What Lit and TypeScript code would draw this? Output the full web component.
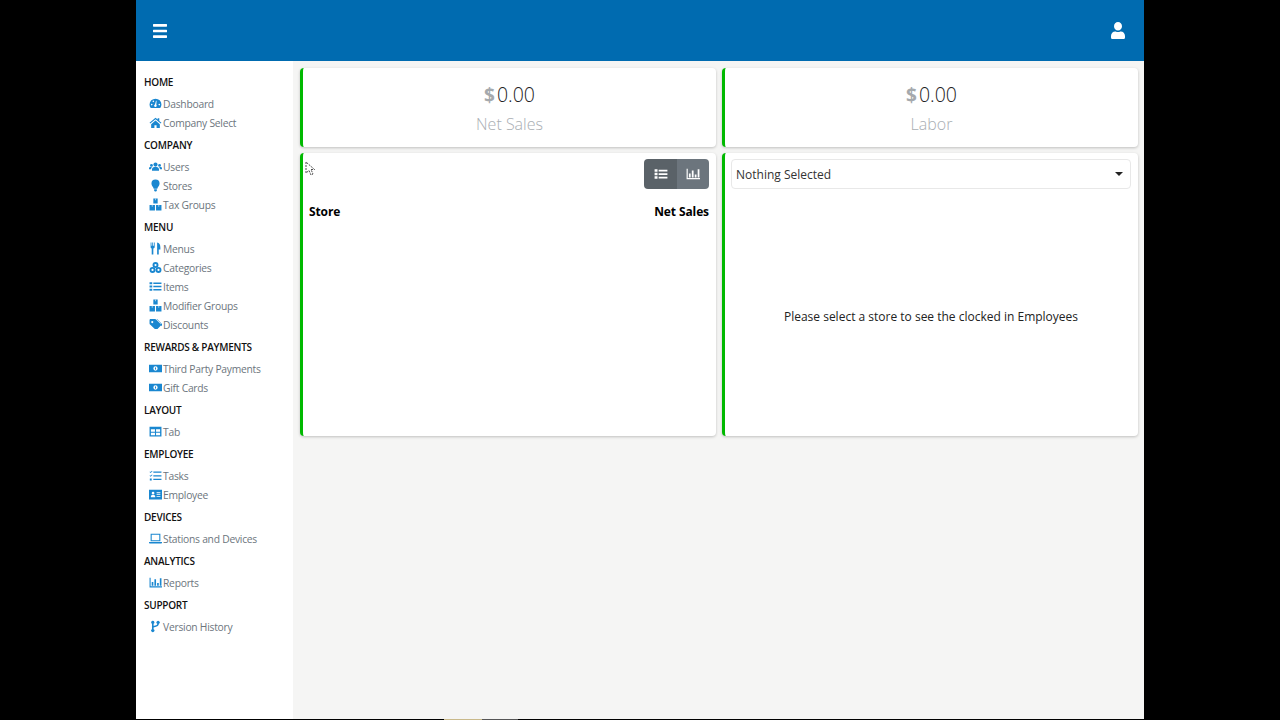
import { LitElement, html, css, svg } from "lit";
import { customElement } from "lit/decorators.js";

const I: Record<string, any> = {
  gauge: svg`<path d="M12 3a11 11 0 0 0-11 11c0 2.500.8 4.700 2.200 6.500h17.600A11 11 0 0 0 23 14 11 11 0 0 0 12 3zm-7 12.500a1.500 1.500 0 1 1 0-3 1.500 1.500 0 0 1 0 3zm3-6a1.500 1.500 0 1 1 0-3 1.500 1.500 0 0 1 0 3zm4 9a2.500 2.500 0 0 1-1-4.800L13 7h1l-.5 7.200A2.500 2.500 0 0 1 12 18.500zm7-3a1.500 1.500 0 1 1 0-3 1.500 1.500 0 0 1 0 3z"/>`,
  home: svg`<path d="M12 3 1 12.500l1.300 1.500L12 6l9.700 8 1.300-1.500-4-3.400V4h-3v2.600z"/><path d="M4 15v7h6v-5h4v5h6v-7l-8-6.800z"/>`,
  users: svg`<circle cx="12" cy="8.500" r="3.800"/><circle cx="4.500" cy="10" r="2.600"/><circle cx="19.500" cy="10" r="2.600"/><path d="M5.500 20v-2.500c0-2.500 2-4.500 4.500-4.500h4c2.500 0 4.500 2 4.500 4.500V20zM0 17v-1.500C0 14 1.200 13 3 13h2.500A6.500 6.500 0 0 0 3.800 17zM24 17v-1.500c0-1.500-1.200-2.500-3-2.500h-2.500a6.500 6.500 0 0 1 1.700 4z"/>`,
  bulb: svg`<path d="M12 1a7.500 7.500 0 0 0-7.500 7.500c0 4.200 3.200 6 4.200 9.500h6.600c1-3.500 4.200-5.300 4.200-9.500A7.500 7.500 0 0 0 12 1z"/><path d="M9.500 19h5v2.500L13 23h-2l-1.500-1.500z"/>`,
  cubes: svg`<path d="M8 1h8v9H8zM1 13h10v10H1zM13 13h10v10H13z"/><path d="M11 1h2v3h-2zM5 13h2v3H5zM17 13h2v3h-2z" fill="#fff" opacity=".55"/>`,
  utensils: svg`<path d="M3 1h1.500v6H6V1h1.500v6H9V1h1.500v8c0 1.500-1 2.500-2.500 3v11H5V12C3.500 11.500 3 10.500 3 9zM15 23V1c4 0 6 4 6 9v4h-3v9z"/>`,
  cats: svg`<circle cx="12" cy="7.500" r="5.500"/><circle cx="6.500" cy="16.500" r="5.500"/><circle cx="17.500" cy="16.500" r="5.500"/><circle cx="12" cy="7.500" r="2" fill="#fff"/><circle cx="6.500" cy="16.500" r="2" fill="#fff"/><circle cx="17.500" cy="16.500" r="2" fill="#fff"/>`,
  list: svg`<path d="M1 4h5v4H1zM1 10h5v4H1zM1 16h5v4H1zM8 4.500h15v3H8zM8 10.500h15v3H8zM8 16.500h15v3H8z"/>`,
  tags: svg`<path fill-rule="evenodd" d="M1 4c0-1 1-2 2-2h8c1 0 2 .5 2.500 1l8 8c1 1 1 2.500 0 3.500l-6.500 6.500c-1 1-2.500 1-3.500 0l-9-8.500C1.500 12 1 11 1 10zm5 1.500a2 2 0 1 0 0 4 2 2 0 0 0 0-4z"/><path d="m15 2 8.500 8.500c1 1 1 2.500 0 3.500l-1 1-1-5.500L14 2z"/>`,
  money: svg`<path fill-rule="evenodd" d="M0 5h24v14H0zm12 3a4 4 0 1 0 0 8 4 4 0 0 0 0-8z"/><path d="M11 10h2v4h-2z"/>`,
  table: svg`<path fill-rule="evenodd" d="M1 3h22v18H1zm2.500 5v4.500H11V8zm9.500 0v4.500h7.500V8zm-9.500 6.500V19H11v-4.500zm9.500 0V19h7.500v-4.500z"/>`,
  tasks: svg`<path d="M1 5.500 2 4.500 3 5.500 5.500 3 6.500 4 3 7.500zM1 12.500 2 11.500 3 12.500 5.500 10 6.500 11 3 14.500zM1.500 17.500h3.500v3.500H1.500zM8 4.500h15v2.500H8zM8 11.500h15V14H8zM8 18h15v2.500H8z"/>`,
  card: svg`<path fill-rule="evenodd" d="M0 3h24v18H0zm7.500 4a2.500 2.500 0 1 0 0 5 2.500 2.500 0 0 0 0-5zM3.500 17h8v-1.500c0-1.500-1.500-2.500-4-2.500s-4 1-4 2.500zM14 8v1.500h7V8zm0 3.500V13h7v-1.500zm0 3.500v1.500h7V15z"/>`,
  laptop: svg`<path fill-rule="evenodd" d="M3 3h18v14H3zm2 2v10h14V5z"/><path d="M0 18.500h24V20c0 .5-.5 1-1 1H1c-.5 0-1-.5-1-1z"/>`,
  chart: svg`<path d="M1 3h2v16h21v2H1zM5 11h3v7H5zM10 6h3v12h-3zM15 13h3v5h-3zM20 4h3v14h-3z"/>`,
  branch: svg`<path fill-rule="evenodd" d="M7 1.500a3 3 0 0 0-1.500 5.600v9.800a3 3 0 1 0 3 0v-3c.5-.5 1.500-.9 3-1 4-.3 6.500-2 6.800-5.800a3 3 0 1 0-3 0c-.2 2-1.500 2.800-3.800 3-1.200.1-2.200.3-3 .7V7.100A3 3 0 0 0 7 1.500z"/>`,
};

const NAV = [
  { h: "HOME", items: [["gauge", "Dashboard"], ["home", "Company Select"]] },
  { h: "COMPANY", items: [["users", "Users"], ["bulb", "Stores"], ["cubes", "Tax Groups"]] },
  { h: "MENU", clip: true, items: [["utensils", "Menus"], ["cats", "Categories"], ["list", "Items"], ["cubes", "Modifier Groups"], ["tags", "Discounts"]] },
  { h: "REWARDS & PAYMENTS", items: [["money", "Third Party Payments"], ["money", "Gift Cards"]] },
  { h: "LAYOUT", items: [["table", "Tab"]] },
  { h: "EMPLOYEE", items: [["tasks", "Tasks"], ["card", "Employee"]] },
  { h: "DEVICES", items: [["laptop", "Stations and Devices"]] },
  { h: "ANALYTICS", items: [["chart", "Reports"]] },
  { h: "SUPPORT", items: [["branch", "Version History"]] },
];

@customElement("app-root")
export class AppRoot extends LitElement {
  static styles = css`
    :host { display: flex; flex-direction: column; height: 720px; background: #000; font-family: "Open Sans", "Liberation Sans", sans-serif; overflow: hidden; }
    .page { width: 1008px; height: 719px; margin: 0 auto; display: flex; flex-direction: column; background: #f5f5f4; flex: none; }
    .strip { height: 1px; display: flex; padding-left: 444px; flex: none; }
    .strip i { width: 38px; background: #c9b98a; }
    .strip i + i { width: 36px; background: #555; }
    header { height: 61px; background: #006bb0; display: flex; align-items: center; justify-content: space-between; padding: 0 19px 0 17px; flex: none; }
    header svg { fill: #fff; display: block; }
    .body { flex: 1; display: flex; min-height: 0; }
    nav { width: 157px; background: #fff; padding: 11px 0 0 8px; box-sizing: border-box; flex: none; }
    h4 { margin: 0 0 2px; padding-top: 1px; font-size: 10px; letter-spacing: -0.25px; line-height: 19px; font-weight: 600; color: #111; white-space: nowrap; }
    ul { list-style: none; margin: 0 0 3px; padding: 0 0 0 4.5px; }
    ul.clip { height: 90px; overflow: hidden; margin-bottom: 8px; }
    li { height: 19px; display: flex; align-items: center; gap: 1.5px; font-size: 10.3px; letter-spacing: -0.25px; color: #6c757d; white-space: nowrap; }
    li svg { width: 13px; height: 13px; fill: #1a87d0; flex: none; }
    main { flex: 1; display: grid; grid-template-columns: 416px 416px; grid-template-rows: 79px 283px; column-gap: 6px; row-gap: 6px; padding: 7px 6px 0 7px; align-content: start; }
    .card { position: relative; background: #fff; border-left: 3px solid #00b900; border-radius: 4px; box-shadow: 0 1px 3px rgba(0,0,0,.22); box-sizing: border-box; }
    .stat { display: flex; flex-direction: column; align-items: center; padding-top: 13px; }
    .val { font-size: 19.5px; line-height: 28px; font-weight: 300; color: #222; display: flex; align-items: center; gap: 2px; }
    .val b { color: #a5a9ad; font-weight: 700; font-size: 19px; }
    .lab { font-size: 16px; line-height: 28px; margin-top: 1px; font-weight: 300; color: #a9aeb3; }
    .panel { padding: 6px 7px 6px 6px; display: flex; flex-direction: column; }
    .tools { display: flex; justify-content: flex-end; }
    .btn { width: 33px; height: 30px; display: flex; align-items: center; justify-content: center; background: #5a6268; border-radius: 4px 0 0 4px; }
    .btn + .btn { width: 32px; background: #6c757d; border-radius: 0 4px 4px 0; }
    .btn svg { width: 14px; height: 14px; fill: #fff; }
    .th { display: flex; justify-content: space-between; margin-top: 14px; font-size: 12px; letter-spacing: -0.1px; line-height: 18px; font-weight: 700; color: #000; }
    .select { height: 30px; box-sizing: border-box; border: 1px solid #e8e8e8; border-radius: 4px; display: flex; align-items: center; justify-content: space-between; padding: 0 7px 0 4px; font-size: 12px; color: #333; }
    .caret { width: 0; height: 0; border: 4px solid transparent; border-top-color: #222; border-bottom: 0; }
    .empty { flex: 1; display: flex; align-items: center; justify-content: center; padding-top: 14px; font-size: 12px; color: #222; }
    .cursor { position: absolute; left: 2px; top: 8px; width: 10px; height: 16px; }
  `;

  render() {
    return html`
      <div class="page">
        <header>
          <svg width="14" height="18" viewBox="0 0 448 512" preserveAspectRatio="none"><path d="M16 132h416c8.837 0 16-7.163 16-16V76c0-8.837-7.163-16-16-16H16C7.163 60 0 67.163 0 76v40c0 8.837 7.163 16 16 16zm0 160h416c8.837 0 16-7.163 16-16v-40c0-8.837-7.163-16-16-16H16c-8.837 0-16 7.163-16 16v40c0 8.837 7.163 16 16 16zm0 160h416c8.837 0 16-7.163 16-16v-40c0-8.837-7.163-16-16-16H16c-8.837 0-16 7.163-16 16v40c0 8.837 7.163 16 16 16z"/></svg>
          <svg width="14" height="17" viewBox="0 0 448 512" preserveAspectRatio="none"><path d="M224 256c70.700 0 128-57.300 128-128S294.700 0 224 0 96 57.300 96 128s57.300 128 128 128zm89.600 32h-16.700c-22.200 10.200-46.900 16-72.900 16s-50.600-5.800-72.900-16h-16.700C60.200 288 0 348.200 0 422.400V464c0 26.500 21.500 48 48 48h352c26.500 0 48-21.500 48-48v-41.600c0-74.200-60.200-134.400-134.400-134.400z"/></svg>
        </header>
        <div class="body">
          <nav>
            ${NAV.map((s) => html`
              <h4>${s.h}</h4>
              <ul class=${s.clip ? "clip" : ""}>
                ${s.items.map(([ic, t]) => html`<li><svg viewBox="0 0 24 24">${I[ic]}</svg><span>${t}</span></li>`)}
              </ul>`)}
          </nav>
          <main>
            <div class="card stat"><div class="val"><b>$</b>0.00</div><div class="lab">Net Sales</div></div>
            <div class="card stat"><div class="val"><b>$</b>0.00</div><div class="lab">Labor</div></div>
            <div class="card panel">
              <svg class="cursor" viewBox="0 0 10 16"><path d="M1 1v11l3-2.500 2 4.500 2-1-2-4.500h3.500z" fill="#fff" stroke="#222" stroke-width=".8" stroke-dasharray="2 1"/></svg>
              <div class="tools">
                <div class="btn"><svg viewBox="0 0 24 24">${I.list}</svg></div>
                <div class="btn"><svg viewBox="0 0 24 24">${I.chart}</svg></div>
              </div>
              <div class="th"><span>Store</span><span>Net Sales</span></div>
            </div>
            <div class="card panel">
              <div class="select"><span>Nothing Selected</span><i class="caret"></i></div>
              <div class="empty">Please select a store to see the clocked in Employees</div>
            </div>
          </main>
        </div>
      </div>
      <div class="strip"><i></i><i></i></div>
    `;
  }
}
